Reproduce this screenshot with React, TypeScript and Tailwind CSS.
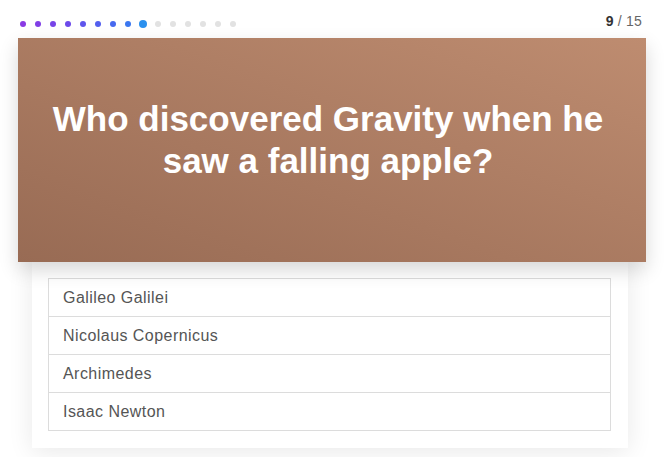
const dots = [
  "#8a3ae4",
  "#803fe6",
  "#7744e8",
  "#6c4aea",
  "#5f55ec",
  "#535fee",
  "#4769ef",
  "#3b77f0",
  "#2b90ee",
];

const answers = [
  "Galileo Galilei",
  "Nicolaus Copernicus",
  "Archimedes",
  "Isaac Newton",
];

export default function App() {
  const total = 15;
  const current = 9;

  return (
    <div className="w-[664px] h-[457px] bg-white overflow-hidden [font-family:'Liberation_Sans',Arial,sans-serif]">
      {/* progress header */}
      <div className="flex justify-between h-[38px] pl-[15px] pr-[22px]">
        <div className="flex items-center h-[8px] mt-[20px]">
          {Array.from({ length: total }).map((_, i) => (
            <div key={i} className="w-[15px] flex justify-center">
              {i + 1 === current ? (
                <span className="block w-[8px] h-[8px] rounded-full" style={{ background: dots[i] }} />
              ) : (
                <span
                  className="block w-[6px] h-[6px] rounded-full"
                  style={{ background: i < current ? dots[i] : "#e2e2e2" }}
                />
              )}
            </div>
          ))}
        </div>
        <div className="text-[14px] leading-[18px] mt-[12px] text-[#666] tracking-[0.2px]">
          <span className="font-bold text-[#333]">{current}</span> / {total}
        </div>
      </div>

      {/* question */}
      <div className="relative z-10 mx-[18px] h-[224px] flex items-center justify-center pl-[26px] pr-[34px] pb-[20px] bg-linear-to-tr from-[#986b54] to-[#be8c70] shadow-[0_8px_18px_rgba(0,0,0,0.16)]">
        <h1 className="text-white font-bold text-[35px] leading-[42px] text-center">
          Who discovered Gravity when he saw a falling apple?
        </h1>
      </div>

      {/* answers */}
      <div className="ml-[32px] mr-[36px] bg-white pl-[16px] pr-[17px] pt-[16px] pb-[17px] shadow-[0_4px_24px_rgba(0,0,0,0.09)]">
        <ul className="border border-[#dcdcdc]">
          {answers.map((a, i) => (
            <li
              key={a}
              className={`flex items-center pl-[14px] text-[16px] tracking-[0.45px] text-[#555] ${i > 0 ? "border-t border-[#dcdcdc] h-[38px]" : "h-[37px]"}`}
            >
              {a}
            </li>
          ))}
        </ul>
      </div>
    </div>
  );
}
